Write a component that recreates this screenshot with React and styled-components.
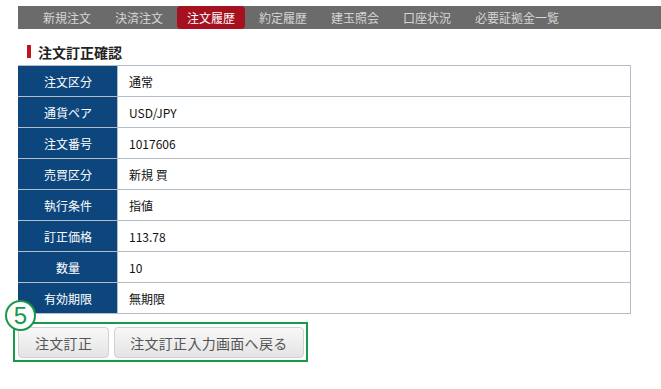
import React from "react";
import styled, { createGlobalStyle } from "styled-components";

const Global = createGlobalStyle`
  html, body { margin: 0; padding: 0; background: #ffffff; }
  body { font-family: "Noto Sans CJK JP", "Noto Sans", sans-serif; }
`;

const Page = styled.div`
  padding-top: 6px;
  width: 661px;
`;

const Nav = styled.nav`
  margin-left: 18px;
  height: 23px;
  background: #6b6b6b;
  display: flex;
  align-items: stretch;
  gap: 4px;
  padding-left: 15px;
`;

const Tab = styled.div`
  padding: 0 10px;
  min-width: 48px;
  display: flex;
  align-items: center;
  justify-content: center;
  font-size: 12px;
  line-height: 1;
  color: ${(p) => (p.$active ? "#ffffff" : "#d6d6d6")};
  background: ${(p) => (p.$active ? "#a5111f" : "transparent")};
  border-radius: ${(p) => (p.$active ? "4px" : "0")};
  white-space: nowrap;
`;

const Heading = styled.h2`
  margin: 16px 0 7px 27px;
  height: 13px;
  display: flex;
  align-items: center;
  gap: 7px;
  font-size: 14px;
  font-weight: 700;
  color: #222;
  line-height: 1;
`;

const HeadBar = styled.span`
  width: 4px;
  height: 13px;
  background: #c0141e;
`;

const Table = styled.div`
  margin-left: 18px;
  width: 612px;
  border: 1px solid #b3bdc8;
  border-left: none;
`;

const Row = styled.div`
  display: grid;
  grid-template-columns: 100px 1fr;
  height: 30px;
  border-bottom: ${(p) => (p.$last ? "none" : "1px solid #b3bdc8")};
`;

const Label = styled.div`
  background: #0c467c;
  color: #ffffff;
  font-size: 12px;
  display: flex;
  align-items: center;
  justify-content: center;
  border-right: 1px solid #b3bdc8;
  padding-left: 1px;
`;

const Value = styled.div`
  color: #111;
  font-size: 12px;
  display: flex;
  align-items: center;
  padding-left: 11px;
`;

const ActionBox = styled.div`
  position: relative;
  margin: 8px 0 0 13px;
  display: inline-flex;
  gap: 5px;
  padding: 3px 2px 2px 3px;
  border: 2px solid #17994a;
`;

const Badge = styled.div`
  position: absolute;
  left: -10px;
  top: -24px;
  width: 27px;
  height: 27px;
  border-radius: 50%;
  border: 2.5px solid #17994a;
  background: #ffffff;
  color: #17994a;
  font-family: "Liberation Sans", sans-serif;
  font-size: 24px;
  line-height: 27px;
  text-align: center;
`;

const Button = styled.button`
  height: 31px;
  padding: 0 ${(p) => p.$pad}px;
  border: 1px solid #d2d2d2;
  border-radius: 4px;
  background: linear-gradient(#f8f8f8, #e4e4e4);
  color: #555;
  font-family: "Noto Sans CJK JP", sans-serif;
  font-size: 14px;
  letter-spacing: 0.3px;
  line-height: 1;
  cursor: pointer;
`;

const tabs = ["新規注文", "決済注文", "注文履歴", "約定履歴", "建玉照会", "口座状況", "必要証拠金一覧"];

const rows = [
  ["注文区分", "通常"],
  ["通貨ペア", "USD/JPY"],
  ["注文番号", "1017606"],
  ["売買区分", "新規 買"],
  ["執行条件", "指値"],
  ["訂正価格", "113.78"],
  ["数量", "10"],
  ["有効期限", "無期限"],
];

export default function App() {
  return (
    <Page>
      <Global />
      <Nav>
        {tabs.map((t) => (
          <Tab key={t} $active={t === "注文履歴"}>
            {t}
          </Tab>
        ))}
      </Nav>
      <Heading>
        <HeadBar />
        注文訂正確認
      </Heading>
      <Table>
        {rows.map(([k, v], i) => (
          <Row key={k} $last={i === rows.length - 1}>
            <Label>{k}</Label>
            <Value>{v}</Value>
          </Row>
        ))}
      </Table>
      <ActionBox>
        <Badge>5</Badge>
        <Button $pad={16}>注文訂正</Button>
        <Button $pad={15}>注文訂正入力画面へ戻る</Button>
      </ActionBox>
    </Page>
  );
}
